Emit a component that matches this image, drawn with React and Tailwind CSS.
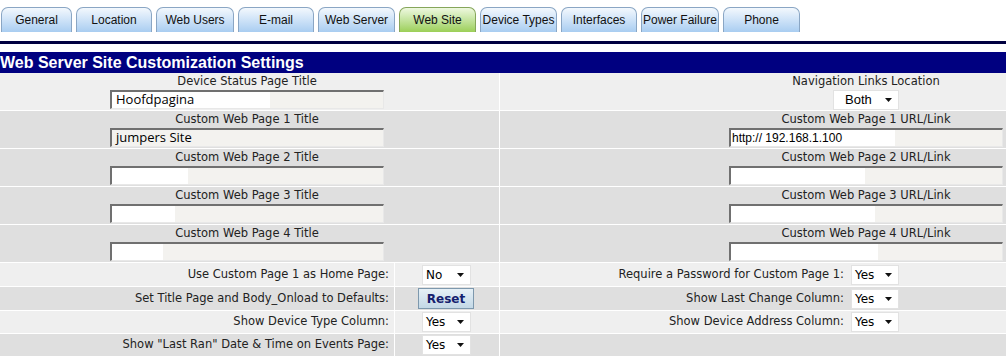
import React from 'react';

const tabs = [
  { label: 'General', w: 'w-[71px]' },
  { label: 'Location', w: 'w-[76px]' },
  { label: 'Web Users', w: 'w-[78px]' },
  { label: 'E-mail', w: 'w-[76px]' },
  { label: 'Web Server', w: 'w-[77px]' },
  { label: 'Web Site', w: 'w-[77px]', active: true },
  { label: 'Device Types', w: 'w-[77px]' },
  { label: 'Interfaces', w: 'w-[76px]' },
  { label: 'Power Failure', w: 'w-[78px]' },
  { label: 'Phone', w: 'w-[77px]' },
];

const label = "font-['DejaVu_Sans',sans-serif] text-[11.5px] text-[#222]";

function Field({ text, blank, mono }) {
  return (
    <div className="relative h-[19px] w-[274px] bg-[#f3f2ef] border-t-2 border-l-2 border-t-[#707070] border-l-[#707070] border-b border-r border-b-[#e8e8e8] border-r-[#e8e8e8] flex items-center overflow-hidden">
      {blank && <span className={`absolute left-0 top-0 h-full bg-white ${blank}`} />}
      {text && (
        <span
          className={
            mono
              ? "relative pl-[1px] font-['Liberation_Sans',Arial,sans-serif] text-[12px] text-black"
              : "relative pl-[4px] font-['Open_Sans',sans-serif] text-[13px] text-black"
          }
        >
          {text}
        </span>
      )}
    </div>
  );
}

function Select({ value, w = 'w-[48px]', font }) {
  return (
    <div className={`h-[20px] ${w} bg-white border border-[#e2e2e2] flex items-center justify-between pl-[3px] pr-[6px]`}>
      <span className={font || "font-['DejaVu_Sans',sans-serif] text-[12px] text-black"}>{value}</span>
      <svg width="7" height="4" viewBox="0 0 7 4"><path d="M0 0h7L3.5 4z" fill="#111" /></svg>
    </div>
  );
}

function TopRow({ left, right, light, leftBlank, leftText }) {
  const bg = light ? 'bg-[#efefef]' : 'bg-[#dfdfdf]';
  return (
    <div className="flex h-[38px] border-b border-white">
      <div className={`w-[500px] ${bg} border-r border-white pt-[1px] pl-[110px]`}>
        <div className={`w-[274px] text-center leading-[15px] whitespace-nowrap ${label}`}>{left}</div>
        <div className="mt-[1px]">
          <Field text={leftText} blank={leftBlank} />
        </div>
      </div>
      <div className={`flex-1 ${bg} pt-[1px] pl-[229px]`}>{right}</div>
    </div>
  );
}

function RightField({ title, text, blank }) {
  return (
    <>
      <div className={`w-[274px] text-center leading-[15px] whitespace-nowrap ${label}`}>{title}</div>
      <div className="mt-[1px]">
        <Field text={text} blank={blank} mono />
      </div>
    </>
  );
}

function BottomRow({ light, h, lLabel, lCtrl, rLabel, rCtrl }) {
  const bg = light ? 'bg-[#efefef]' : 'bg-[#dfdfdf]';
  return (
    <div className={`flex ${h} border-b border-white`}>
      <div className={`w-[395px] ${bg} border-r border-white flex items-center justify-end pr-[5px] whitespace-nowrap ${label}`}>{lLabel}</div>
      <div className={`w-[105px] ${bg} border-r border-white flex items-center pl-[27px]`}>{lCtrl}</div>
      <div className={`w-[348px] ${bg} flex items-center justify-end pr-[4px] whitespace-nowrap ${label}`}>{rLabel}</div>
      <div className={`flex-1 ${bg} flex items-center pl-[3px]`}>{rCtrl}</div>
    </div>
  );
}

export default function App() {
  return (
    <div className="w-[1006px] h-[356px] bg-white overflow-hidden">
      <div className="flex gap-[4px] pt-[7px] pl-[1px] h-[32px]">
        {tabs.map((t) => (
          <div
            key={t.label}
            className={`${t.w} h-[25px] rounded-t-[7px] border border-b-0 flex items-center justify-center font-['Liberation_Sans',Tahoma,sans-serif] text-[12px] text-[#111] ${
              t.active
                ? 'border-[#86a65a] bg-gradient-to-b from-[#eef8df] to-[#9ccf56]'
                : 'border-[#8aa6c4] bg-gradient-to-b from-[#f3f8fd] to-[#a9cdf1]'
            }`}
          >
            {t.label}
          </div>
        ))}
      </div>
      <div className="mt-[9px] h-[3px] bg-[#000040]" />
      <div className="mt-[8px] h-[21px] bg-[#000080] flex items-center">
        <span className="font-['Liberation_Sans',Tahoma,sans-serif] font-bold text-[16px] text-white">
          Web Server Site Customization Settings
        </span>
      </div>

      <TopRow
        light
        left="Device Status Page Title"
        leftText="Hoofdpagina"
        leftBlank="w-[158px]"
        right={
          <div className="w-[274px] flex flex-col items-center">
            <div className={`leading-[15px] ${label}`}>Navigation Links Location</div>
            <div className="mt-[1px]">
              <Select value="Both" w="w-[66px]" font="font-['Liberation_Sans',Arial,sans-serif] text-[13px] text-black pl-[8px]" />
            </div>
          </div>
        }
      />
      <TopRow
        left="Custom Web Page 1 Title"
        leftText="jumpers Site"
        right={<RightField title="Custom Web Page 1 URL/Link" text="http:// 192.168.1.100" blank="w-[164px]" />}
      />
      <TopRow
        left="Custom Web Page 2 Title"
        leftBlank="w-[76px]"
        right={<RightField title="Custom Web Page 2 URL/Link" blank="w-[134px]" />}
      />
      <TopRow
        left="Custom Web Page 3 Title"
        leftBlank="w-[63px]"
        right={<RightField title="Custom Web Page 3 URL/Link" blank="w-[144px]" />}
      />
      <TopRow
        left="Custom Web Page 4 Title"
        leftBlank="w-[51px]"
        right={<RightField title="Custom Web Page 4 URL/Link" blank="w-[147px]" />}
      />

      <BottomRow
        light
        h="h-[24px]"
        lLabel="Use Custom Page 1 as Home Page:"
        lCtrl={<Select value="No" w="w-[49px]" />}
        rLabel="Require a Password for Custom Page 1:"
        rCtrl={<Select value="Yes" />}
      />
      <BottomRow
        h="h-[24px]"
        lLabel="Set Title Page and Body_Onload to Defaults:"
        lCtrl={
          <button className="-ml-[4px] h-[21px] w-[56px] border border-[#7d98ad] bg-gradient-to-b from-[#e6f0f6] to-[#c3d8e6] font-['DejaVu_Sans',sans-serif] font-bold text-[12px] text-[#14206e]">
            Reset
          </button>
        }
        rLabel="Show Last Change Column:"
        rCtrl={<Select value="Yes" />}
      />
      <BottomRow
        light
        h="h-[23px]"
        lLabel="Show Device Type Column:"
        lCtrl={<Select value="Yes" w="w-[49px]" />}
        rLabel="Show Device Address Column:"
        rCtrl={<Select value="Yes" />}
      />
      <BottomRow
        h="h-[23px]"
        lLabel={'Show "Last Ran" Date & Time on Events Page:'}
        lCtrl={<Select value="Yes" w="w-[49px]" />}
        rLabel=""
        rCtrl={null}
      />
    </div>
  );
}
